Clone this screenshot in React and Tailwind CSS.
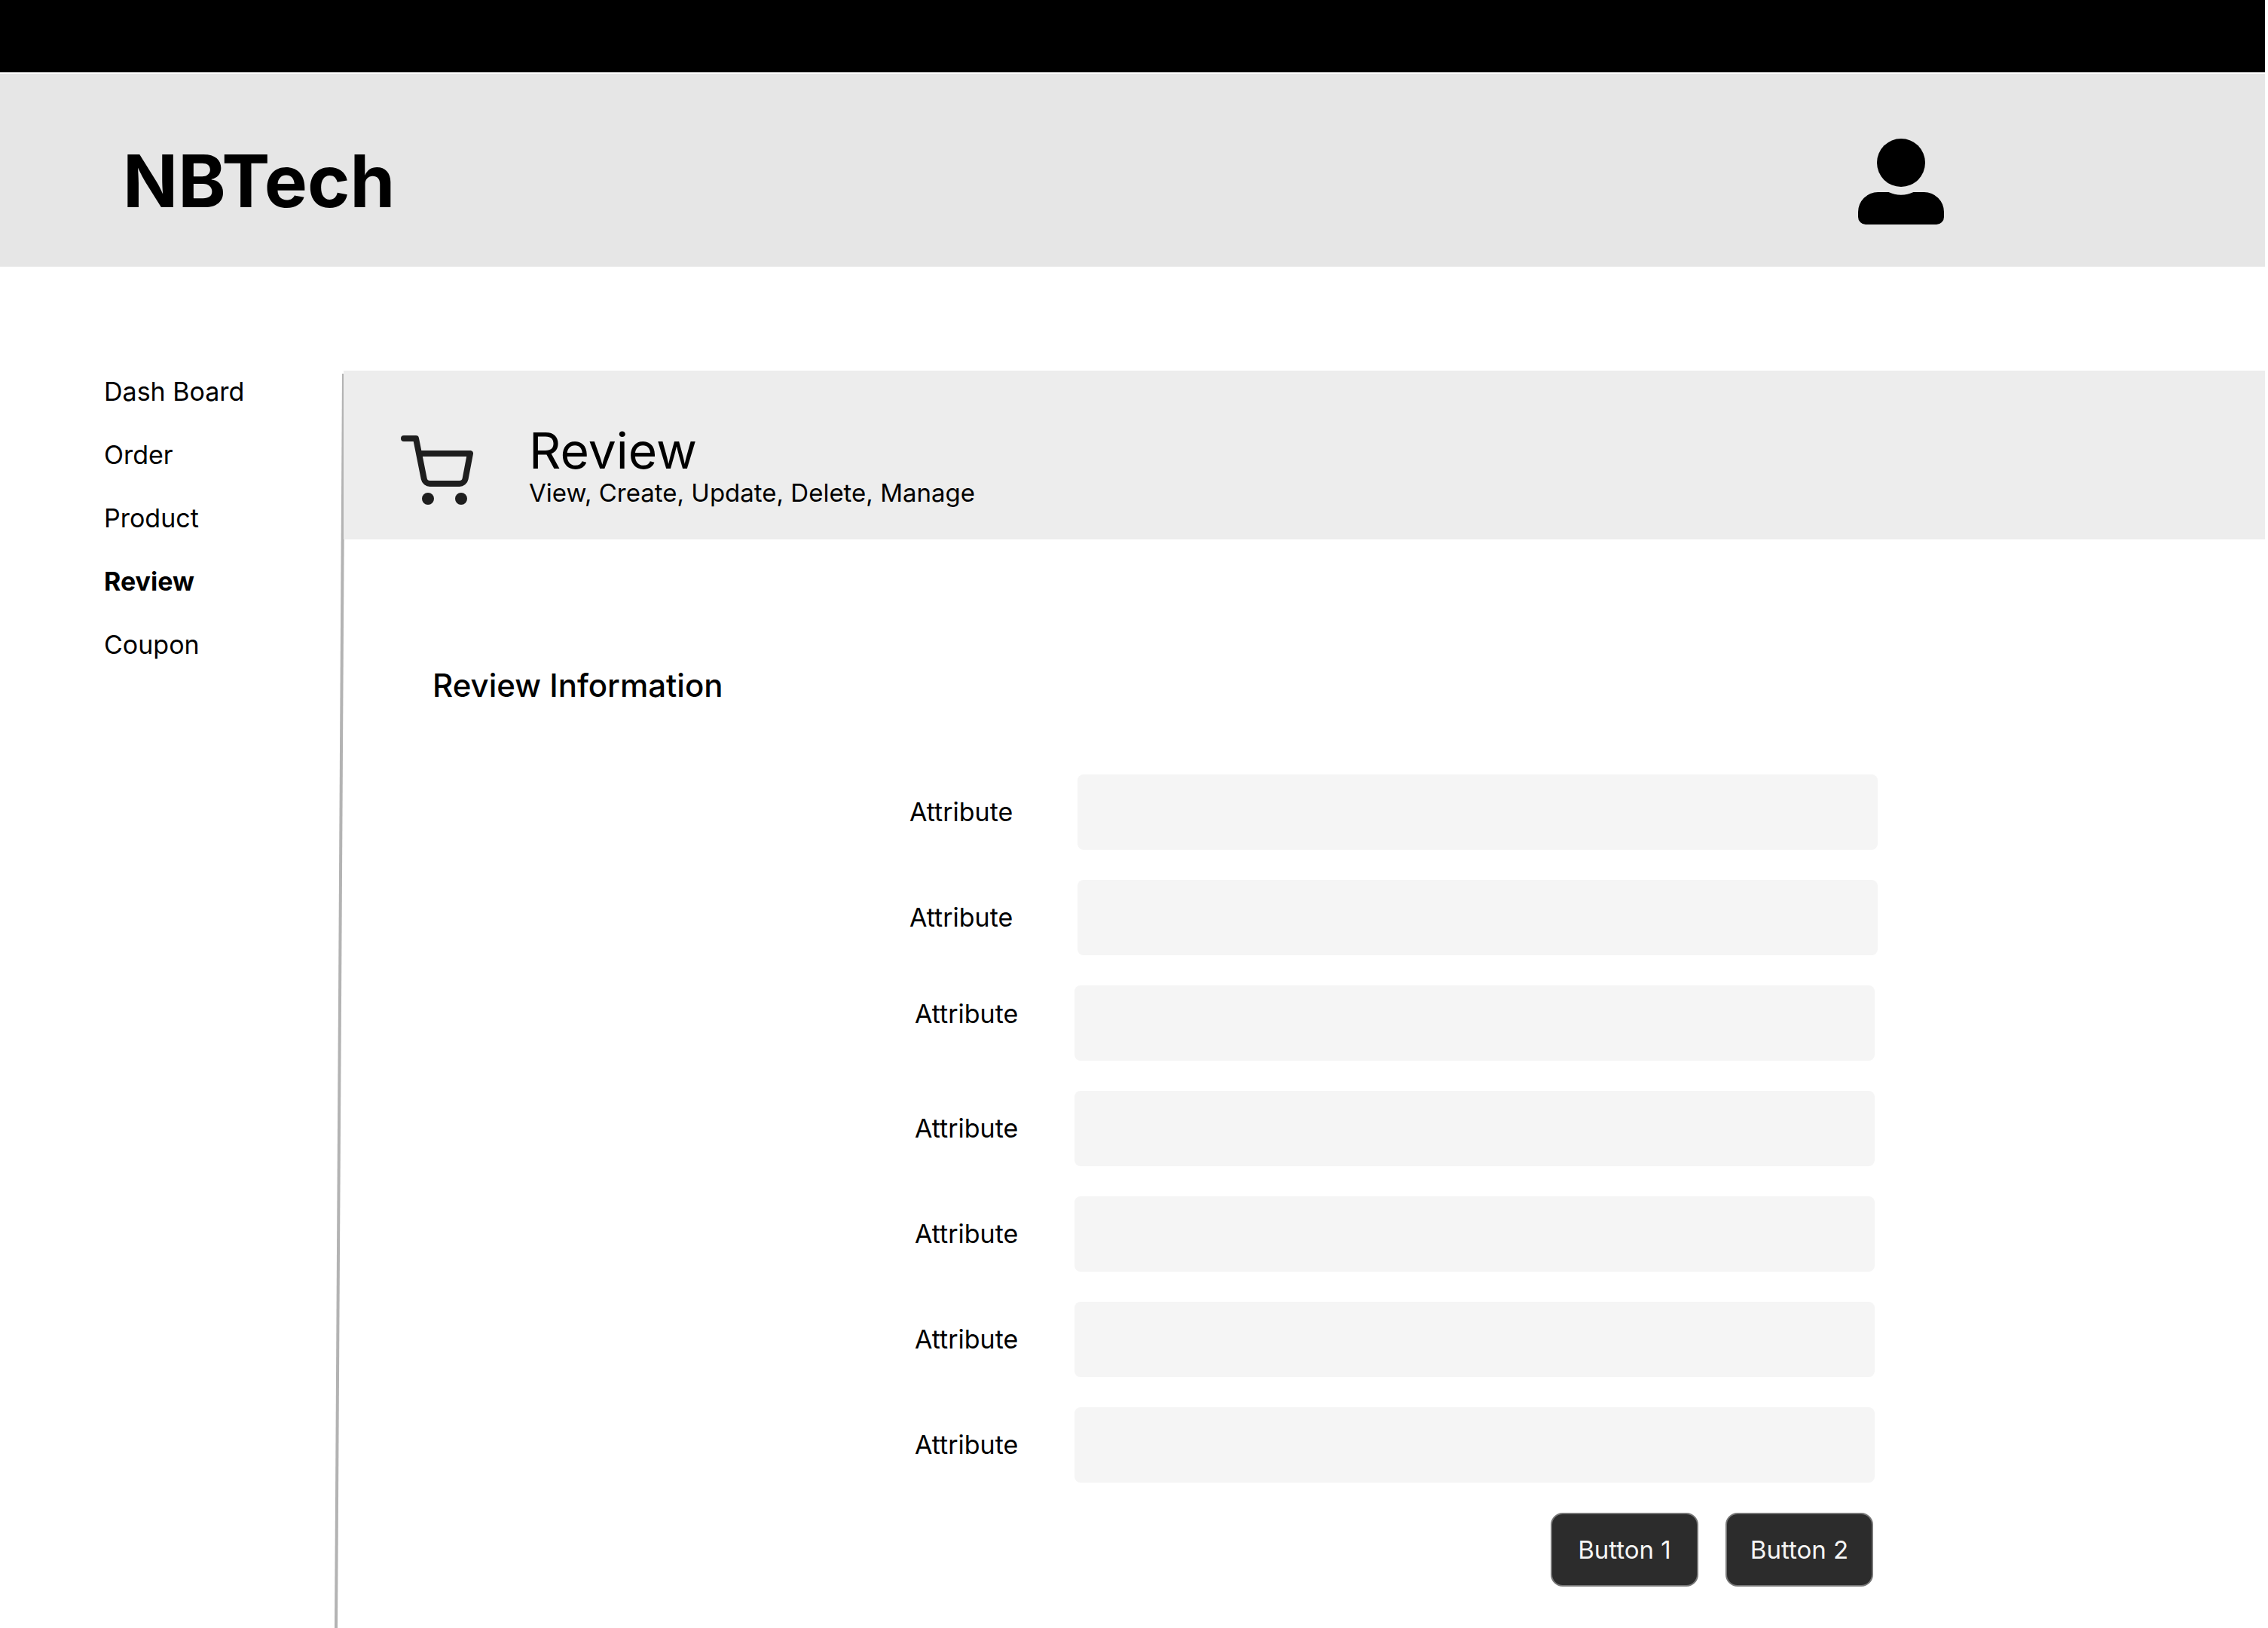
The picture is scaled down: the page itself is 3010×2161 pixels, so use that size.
import React from "react";

const navItems = [
  { label: "Dash Board", current: false },
  { label: "Order", current: false },
  { label: "Product", current: false },
  { label: "Review", current: true },
  { label: "Coupon", current: false },
];

const fieldGroups = [
  {
    row: "gap-[86px] pl-[751px] pr-[514px]",
    fields: [{ id: "attribute-1" }, { id: "attribute-2" }],
  },
  {
    row: "gap-[75px] pl-[758px] pr-[518px]",
    fields: [
      { id: "attribute-3", raised: true },
      { id: "attribute-4" },
      { id: "attribute-5" },
      { id: "attribute-6" },
      { id: "attribute-7" },
    ],
  },
];

function UserIcon() {
  return (
    <svg viewBox="0 0 114 114" className="size-[114px]" fill="black" aria-hidden="true">
      <circle cx="57" cy="32" r="32" />
      <path d="M26.500 71H40.500Q48 74.700 57 74.700T73.500 71H87.500A26.500 26.500 0 0 1 114 97.500V104A10 10 0 0 1 104 114H10A10 10 0 0 1 0 104V97.500A26.500 26.500 0 0 1 26.500 71Z" />
    </svg>
  );
}

function CartIcon() {
  return (
    <svg
      viewBox="0 0 24 24"
      className="size-24 shrink-0"
      fill="none"
      stroke="#1e1e1e"
      strokeWidth="2"
      strokeLinecap="round"
      strokeLinejoin="round"
      aria-hidden="true"
    >
      <circle cx="9" cy="21" r="1" />
      <circle cx="20" cy="21" r="1" />
      <path d="M1 1h4l2.680 13.390a2 2 0 0 0 2 1.610h9.720a2 2 0 0 0 2-1.610L23 6H6" />
    </svg>
  );
}

export default function App() {
  return (
    <div className="flex min-h-screen flex-col bg-white pr-1 font-['Inter',sans-serif] text-black">
      <div className="h-24 bg-black" />
      <header className="mt-0.5 flex h-64 items-start justify-between bg-[#e6e6e6] pt-[84px] pr-[426px] pl-[163px]">
        <a href="#home" className="text-[96px] leading-[116px] font-bold">
          NBTech
        </a>
        <button type="button" aria-label="Account" className="pt-0.5">
          <UserIcon />
        </button>
      </header>

      <div className="flex flex-1 pt-[138px]">
        <nav className="w-[442px] shrink-0 pt-1 pl-[138px]">
          <ul className="flex flex-col gap-9">
            {navItems.map((item) => (
              <li key={item.label} className="flex">
                <a
                  href={"#" + item.label.toLowerCase().replace(" ", "-")}
                  aria-current={item.current ? "page" : undefined}
                  className={item.current ? "text-[34px] leading-[48px] font-bold" : "text-[34px] leading-[48px]"}
                >
                  {item.label}
                </a>
              </li>
            ))}
          </ul>
        </nav>

        <div className="flex w-3.5 shrink-0 pt-1">
          <svg viewBox="0 0 14 1665" preserveAspectRatio="none" className="min-h-[1665px] w-3.5 overflow-visible" aria-hidden="true">
            <path d="M14 0L4 1665" stroke="#b3b3b3" strokeWidth="4" />
          </svg>
        </div>

        <main className="relative min-w-0 flex-1">
          <div className="flex h-56 items-start bg-[#ededed] pt-[74px] pl-[76px]">
            <div className="pt-3">
              <CartIcon />
            </div>
            <div className="pl-[74px]">
              <h1 className="text-[66px] leading-[64px]">Review</h1>
              <p className="text-[33px] leading-[48px]">View, Create, Update, Delete, Manage</p>
            </div>
          </div>

          <h2 className="mt-[164px] pl-[118px] text-[42px] leading-[60px] font-medium">Review Information</h2>

          <form className="mt-[88px] flex flex-col gap-10">
            {fieldGroups.map((group) => (
              <div key={group.row} className="flex flex-col gap-10">
                {group.fields.map((field) => (
                  <div key={field.id} className={"flex items-center " + group.row}>
                    <label
                      htmlFor={field.id}
                      className={field.raised ? "w-[137px] shrink-0 pb-6 text-[34px] leading-[50px]" : "w-[137px] shrink-0 text-[34px] leading-[50px]"}
                    >
                      Attribute
                    </label>
                    <input id={field.id} type="text" className="h-[100px] min-w-0 flex-1 rounded-lg bg-[#f5f5f5] px-6 text-[34px]" />
                  </div>
                ))}
              </div>
            ))}
            <div className="flex justify-end gap-9 pr-[520px]">
              {["Button 1", "Button 2"].map((label) => (
                <button
                  key={label}
                  type="button"
                  className="h-[98px] w-[196px] rounded-2xl border-2 border-[#767676] bg-[#2c2c2c] text-[33px] leading-[34px] text-[#f5f5f5]"
                >
                  {label}
                </button>
              ))}
            </div>
          </form>
        </main>
      </div>
    </div>
  );
}
